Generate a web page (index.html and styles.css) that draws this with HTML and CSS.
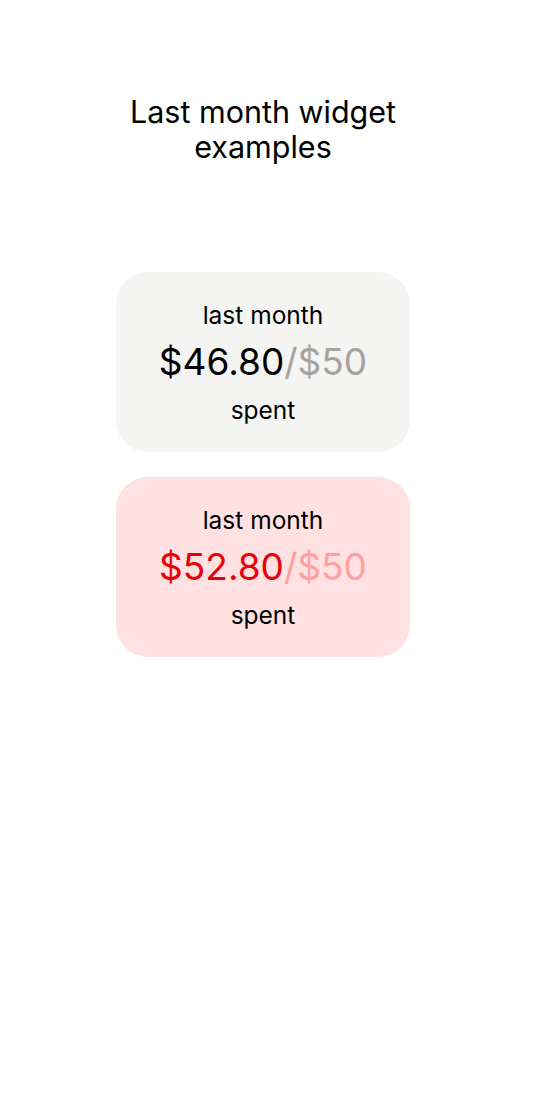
FILE: index.html
```html
<!DOCTYPE html>
<html>
<head>
<meta charset="utf-8">
<link rel="stylesheet" href="styles.css">
</head>
<body>
<main class="page">
  <h1 class="title">Last month widget<br>examples</h1>
  <section class="widgets">
    <div class="widget widget-ok">
      <div class="label">last month</div>
      <div class="amount"><span class="spent-val">$46.80</span><span class="limit">/$50</span></div>
      <div class="label">spent</div>
    </div>
    <div class="widget widget-over">
      <div class="label">last month</div>
      <div class="amount"><span class="spent-val">$52.80</span><span class="limit">/$50</span></div>
      <div class="label">spent</div>
    </div>
  </section>
</main>
</body>
</html>
```

FILE: styles.css
```css
html, body {
  margin: 0;
  padding: 0;
  background: #ffffff;
}
body {
  font-family: Inter, "Noto Sans", sans-serif;
  color: #000;
}
.page {
  width: 526px;
  display: flex;
  flex-direction: column;
  align-items: center;
}
.title {
  margin: 94px 0 0;
  font-size: 30.5px;
  font-weight: 400;
  line-height: 35px;
  text-align: center;
}
.widgets {
  margin-top: 108px;
  display: flex;
  flex-direction: column;
  gap: 25px;
}
.widget {
  width: 294px;
  height: 180px;
  border-radius: 32px;
  box-sizing: border-box;
  padding-top: 27px;
  display: flex;
  flex-direction: column;
  align-items: center;
}
.widget-ok { background: #f4f4f3; }
.widget-over { background: #ffe1e1; }
.label {
  font-size: 24.5px;
  line-height: 32px;
}
.amount {
  font-size: 37px;
  line-height: 50px;
  margin: 6px 0 7px;
}
.widget-ok .spent-val { color: #000; }
.widget-ok .limit { color: #a8a29e; }
.widget-over .spent-val { color: #e8000b; }
.widget-over .limit { color: #ffa0a0; }
```
